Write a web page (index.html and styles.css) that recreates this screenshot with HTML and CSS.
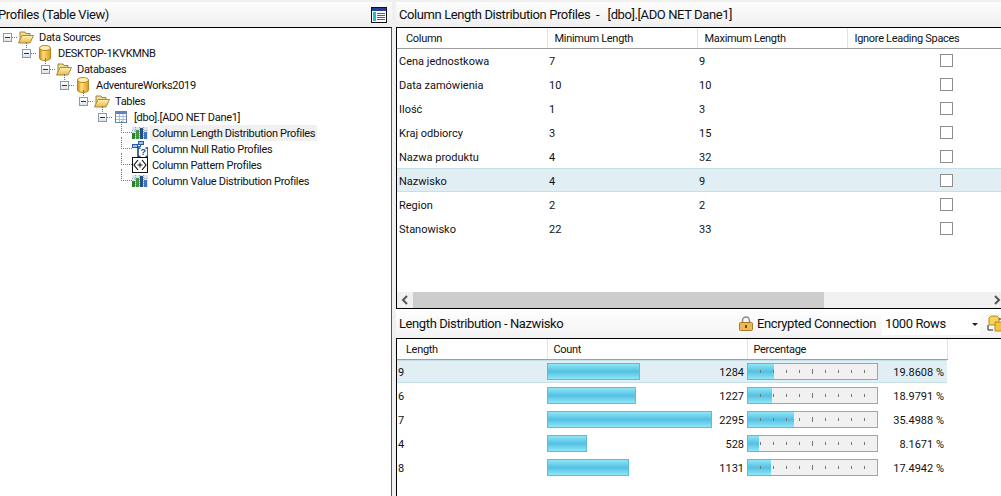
FILE: index.html
```html
<!DOCTYPE html>
<html lang="en">
<head>
<meta charset="UTF-8">
<meta name="viewport" content="width=device-width, initial-scale=1.0">
<title>Data Profile Viewer</title>
<link rel="stylesheet" href="styles.css">
</head>
<body>
<svg class="defs" width="0" height="0">
    <defs>
        <linearGradient id="dbFill" x1="0" x2="1" y1="0" y2="0">
            <stop offset="0" stop-color="#c98a12"/>
            <stop offset="0.35" stop-color="#ffe07a"/>
            <stop offset="1" stop-color="#d99a1e"/>
        </linearGradient>
        <linearGradient id="folderFill" x1="0" x2="0" y1="0" y2="1">
            <stop offset="0" stop-color="#fff3b8"/>
            <stop offset="1" stop-color="#eeb73f"/>
        </linearGradient>
        <symbol id="folder" viewBox="0 0 16 16">
            <path d="M2 13V3h5l1 1.500h4V7" fill="#f5dc8c" stroke="#9a8448"/>
            <path d="M.5 14 4 6.500h11.500L12 14z" fill="url(#folderFill)" stroke="#a58a45"/>
        </symbol>
        <symbol id="db" viewBox="0 0 12 16">
            <path d="M.5 3v10c0 1.500 2.500 2.500 5.500 2.500s5.500-1 5.500-2.500V3z" fill="url(#dbFill)" stroke="#b9862a"/>
            <ellipse cx="6" cy="3" rx="5.500" ry="2.500" fill="#fff2b0" stroke="#b9862a"/>
        </symbol>
        <symbol id="table" viewBox="0 0 12 12">
            <rect x=".5" y=".5" width="11" height="11" fill="#fff" stroke="#6d83a6"/>
            <rect x="1" y="1" width="10" height="2" fill="#5f83c0"/>
            <path d="M1 5.500h10M1 8.500h10M4.500 3v8M8 3v8" stroke="#a9bcd6"/>
        </symbol>
        <symbol id="chart" viewBox="0 0 16 12">
            <rect width="16" height="12" fill="#dfe3ea"/>
            <path d="M3.500 0v12M7.500 0v12M11.500 0v12M0 3.500h16M0 7.500h16" stroke="#9aa3b2" stroke-dasharray="1 1"/>
            <rect x="0" y="6" width="3" height="6" fill="#2f7d2f"/>
            <rect x="4" y="3" width="3" height="9" fill="#3c9a3c"/>
            <rect x="8" y="1" width="3" height="11" fill="#274f8e"/>
            <rect x="12" y="5" width="3" height="7" fill="#3f74c4"/>
        </symbol>
        <symbol id="nullratio" viewBox="0 0 16 16">
            <rect x="6.500" y=".5" width="5" height="3" fill="#9cc0ee" stroke="#2f5c9e"/>
            <rect x=".5" y="3.500" width="5" height="3" fill="#9cc0ee" stroke="#2f5c9e"/>
            <path d="M8.500 3.500v2h-3" fill="none" stroke="#2f5c9e"/>
            <path d="M8.500 7h-2.500v8.500h2.500M13.500 7h2.500v8.500h-2.500" fill="none" stroke="#17458c" stroke-width="1.600"/>
            <text x="11" y="14" text-anchor="middle" class="qmark">?</text>
        </symbol>
        <symbol id="pattern" viewBox="0 0 16 16">
            <rect x=".5" y=".5" width="15" height="15" fill="#fff" stroke="#111"/>
            <path d="M6 3 2 8l4 5M10 3l4 5-4 5" fill="none" stroke="#111" stroke-width="1.200"/>
            <path d="M8 5.500v5M5.500 8h5" stroke="#111"/>
        </symbol>
    </defs>
</svg>

<div class="window">
    <section class="left-pane">
        <header class="titlebar">
            <span class="title clipped">Profiles (Table View)</span>
            <svg class="view-icon" width="16" height="16" viewBox="0 0 16 16">
                <rect x=".5" y=".5" width="15" height="15" fill="#fff" stroke="#111"/>
                <rect x="1" y="1" width="14" height="3" fill="#27409a"/>
                <rect x="2" y="5" width="3" height="9" fill="#2ab4e0"/>
                <path d="M6 6.500h8M6 8.500h8M6 10.500h8M6 12.500h8" stroke="#2f62c8"/>
            </svg>
        </header>
        <ul class="tree">
            <li class="node lvl-0"><i class="expander"></i><svg class="ico-folder"><use href="#folder"/></svg><span>Data Sources</span></li>
            <li class="node lvl-1"><i class="expander"></i><svg class="ico-db"><use href="#db"/></svg><span>DESKTOP-1KVKMNB</span></li>
            <li class="node lvl-2"><i class="expander"></i><svg class="ico-folder"><use href="#folder"/></svg><span>Databases</span></li>
            <li class="node lvl-3"><i class="expander"></i><svg class="ico-db"><use href="#db"/></svg><span>AdventureWorks2019</span></li>
            <li class="node lvl-4"><i class="expander"></i><svg class="ico-folder"><use href="#folder"/></svg><span>Tables</span></li>
            <li class="node lvl-5"><i class="expander"></i><svg class="ico-table"><use href="#table"/></svg><span>[dbo].[ADO NET Dane1]</span></li>
            <li class="node leaf"><i class="branch"></i><svg class="ico-leaf"><use href="#chart"/></svg><span class="current">Column Length Distribution Profiles</span></li>
            <li class="node leaf"><i class="branch"></i><svg class="ico-leaf"><use href="#nullratio"/></svg><span>Column Null Ratio Profiles</span></li>
            <li class="node leaf"><i class="branch"></i><svg class="ico-leaf"><use href="#pattern"/></svg><span>Column Pattern Profiles</span></li>
            <li class="node leaf"><i class="branch"></i><svg class="ico-leaf"><use href="#chart"/></svg><span>Column Value Distribution Profiles</span></li>
        </ul>
    </section>

    <section class="right-pane">
        <header class="titlebar">
            <span class="title">Column Length Distribution Profiles &nbsp;-&nbsp;&nbsp; [dbo].[ADO NET Dane1]</span>
        </header>
        <div class="grid-box upper">
            <table class="grid">
                <thead>
                    <tr><th>Column</th><th>Minimum Length</th><th>Maximum Length</th><th>Ignore Leading Spaces</th></tr>
                </thead>
                <tbody>
                    <tr><td>Cena jednostkowa</td><td>7</td><td>9</td><td class="check"><i></i></td></tr>
                    <tr><td>Data zamówienia</td><td>10</td><td>10</td><td class="check"><i></i></td></tr>
                    <tr><td>Ilość</td><td>1</td><td>3</td><td class="check"><i></i></td></tr>
                    <tr><td>Kraj odbiorcy</td><td>3</td><td>15</td><td class="check"><i></i></td></tr>
                    <tr><td>Nazwa produktu</td><td>4</td><td>32</td><td class="check"><i></i></td></tr>
                    <tr class="selected"><td>Nazwisko</td><td>4</td><td>9</td><td class="check"><i></i></td></tr>
                    <tr><td>Region</td><td>2</td><td>2</td><td class="check"><i></i></td></tr>
                    <tr><td>Stanowisko</td><td>22</td><td>33</td><td class="check"><i></i></td></tr>
                </tbody>
            </table>
            <div class="scrollbar">
                <svg class="arrow" width="16" height="16" viewBox="0 0 16 16"><path d="M10 4 6 8l4 4" fill="none" stroke="#555" stroke-width="2"/></svg>
                <div class="thumb"></div>
                <div class="track"></div>
                <svg class="arrow end" width="16" height="16" viewBox="0 0 16 16"><path d="M6 4l4 4-4 4" fill="none" stroke="#555" stroke-width="2"/></svg>
            </div>
        </div>

        <header class="titlebar sub">
            <span class="title">Length Distribution - Nazwisko</span>
            <div class="tools">
                <svg width="14" height="15" viewBox="0 0 14 15">
                    <path d="M3.500 7V4.500a3.500 3.500 0 0 1 7 0V7" fill="none" stroke="#8a8a80" stroke-width="1.500"/>
                    <rect x=".5" y="6.500" width="13" height="8" rx="1" fill="#e9b95a" stroke="#a77b2a"/>
                    <path d="M7 9v3" stroke="#6d4d12" stroke-width="2"/>
                </svg>
                <span class="encrypted">Encrypted Connection</span>
                <div class="rows-select">1000 Rows<b></b></div>
                <svg class="cubes" width="16" height="17" viewBox="0 0 16 17">
                    <path d="M4 1h6l2 2v7H2V3z" fill="#f7d35c" stroke="#b28a1e"/>
                    <path d="M8 7h8v9H8z" fill="#f2c438" stroke="#b28a1e"/>
                    <path d="M1 10v5h5M12 4h3v2" fill="none" stroke="#222"/>
                </svg>
            </div>
        </header>
        <div class="grid-box lower">
            <table class="grid dist">
                <thead>
                    <tr><th>Length</th><th>Count</th><th>Percentage</th></tr>
                </thead>
                <tbody>
                    <tr class="selected">
                        <td>9</td>
                        <td><div class="count"><div class="bar" style="width:93px"></div><span>1284</span></div></td>
                        <td><div class="pct"><div class="meter"><div class="fill" style="width:19.86%"></div><div class="ticks"><i></i><i></i><i></i><i></i><i class="mid"></i><i></i><i></i><i></i><i></i></div></div><span>19.8608 %</span></div></td>
                    </tr>
                    <tr>
                        <td>6</td>
                        <td><div class="count"><div class="bar" style="width:89px"></div><span>1227</span></div></td>
                        <td><div class="pct"><div class="meter"><div class="fill" style="width:18.98%"></div><div class="ticks"><i></i><i></i><i></i><i></i><i class="mid"></i><i></i><i></i><i></i><i></i></div></div><span>18.9791 %</span></div></td>
                    </tr>
                    <tr>
                        <td>7</td>
                        <td><div class="count"><div class="bar" style="width:165px"></div><span>2295</span></div></td>
                        <td><div class="pct"><div class="meter"><div class="fill" style="width:35.5%"></div><div class="ticks"><i></i><i></i><i></i><i></i><i class="mid"></i><i></i><i></i><i></i><i></i></div></div><span>35.4988 %</span></div></td>
                    </tr>
                    <tr>
                        <td>4</td>
                        <td><div class="count"><div class="bar" style="width:40px"></div><span>528</span></div></td>
                        <td><div class="pct"><div class="meter"><div class="fill" style="width:8.17%"></div><div class="ticks"><i></i><i></i><i></i><i></i><i class="mid"></i><i></i><i></i><i></i><i></i></div></div><span>8.1671 %</span></div></td>
                    </tr>
                    <tr>
                        <td>8</td>
                        <td><div class="count"><div class="bar" style="width:82px"></div><span>1131</span></div></td>
                        <td><div class="pct"><div class="meter"><div class="fill" style="width:17.49%"></div><div class="ticks"><i></i><i></i><i></i><i></i><i class="mid"></i><i></i><i></i><i></i><i></i></div></div><span>17.4942 %</span></div></td>
                    </tr>
                </tbody>
            </table>
        </div>
    </section>
</div>
</body>
</html>
```

FILE: styles.css
```css
html, body {
    margin: 0;
    height: 100%;
    overflow: hidden;
}
body {
    background: #f0f0f0;
    font-family: Roboto, "Noto Sans", sans-serif;
    font-size: 11px;
    letter-spacing: -0.3px;
    color: #111;
}
.defs {
    position: absolute;
}
.qmark {
    font-family: "Liberation Sans", sans-serif;
    font-size: 9px;
    font-weight: bold;
    fill: #17458c;
}
.window {
    display: flex;
    height: 494px;
    padding-top: 2px;
}
.left-pane {
    width: 392px;
    flex: none;
    display: flex;
    flex-direction: column;
}
.right-pane {
    margin-left: 4px;
    flex: 1;
    min-width: 0;
    display: flex;
    flex-direction: column;
}
.titlebar {
    height: 25px;
    flex: none;
    display: flex;
    align-items: center;
    justify-content: space-between;
    background: linear-gradient(#fdfdfd, #efefef);
    font-size: 13px;
    letter-spacing: -0.4px;
    white-space: nowrap;
}
.title {
    padding-left: 3px;
}
.title.clipped {
    padding-left: 0;
    margin-left: -2px;
}
.view-icon {
    margin-right: 5px;
}

/* tree */
.tree {
    flex: 1;
    margin: 0;
    padding: 1px 0 0;
    list-style: none;
    background: #fff;
    border-top: 1px solid #000;
    border-right: 1px solid #555;
}
.node {
    position: relative;
    height: 16px;
    display: flex;
    align-items: center;
    white-space: nowrap;
}
.lvl-0 { padding-left: 3px; }
.lvl-1 { padding-left: 22px; }
.lvl-2 { padding-left: 41px; }
.lvl-3 { padding-left: 60px; }
.lvl-4 { padding-left: 79px; }
.lvl-5 { padding-left: 98px; }
.leaf { padding-left: 132px; }
.expander {
    position: relative;
    flex: none;
    box-sizing: border-box;
    width: 9px;
    height: 9px;
    border: 1px solid #8a9bb0;
    background: linear-gradient(#fff, #dfe3ea);
}
.expander::before {
    content: "";
    position: absolute;
    left: 1px;
    right: 1px;
    top: 3px;
    height: 1px;
    background: #333;
}
.expander::after {
    content: "";
    position: absolute;
    left: 8px;
    top: 3px;
    width: 5px;
    border-top: 1px dotted #777;
}
.node:not(.lvl-0):not(.leaf)::before {
    content: "";
    position: absolute;
    top: -3px;
    height: 6px;
    border-left: 1px dotted #777;
}
.lvl-1::before { left: 26px; }
.lvl-2::before { left: 45px; }
.lvl-3::before { left: 64px; }
.lvl-4::before { left: 83px; }
.lvl-5::before { left: 102px; }
.branch {
    position: absolute;
    left: 121px;
    top: -4px;
    width: 11px;
    height: 12px;
    border-left: 1px dotted #777;
    border-bottom: 1px dotted #777;
    box-sizing: border-box;
}
.ico-folder {
    width: 16px;
    height: 16px;
    margin-left: 6px;
    flex: none;
}
.ico-db {
    width: 12px;
    height: 16px;
    margin-left: 8px;
    flex: none;
}
.ico-table {
    width: 12px;
    height: 12px;
    margin-left: 8px;
    flex: none;
}
.ico-leaf {
    width: 16px;
    height: 16px;
    flex: none;
}
.node span {
    box-sizing: border-box;
    height: 16px;
    padding: 1px 2px 0;
    line-height: 15px;
}
.lvl-0 span, .lvl-2 span, .lvl-4 span {
    margin-left: 3px;
}
.lvl-1 span, .lvl-3 span, .lvl-5 span {
    margin-left: 5px;
}
.leaf span {
    margin-left: 2px;
}
.current {
    background: #f0f0f0;
}

/* grids */
.grid-box {
    background: #fff;
    border-top: 1px solid #000;
    border-left: 1px solid #000;
    box-sizing: border-box;
    overflow: hidden;
}
.upper {
    height: 282px;
    flex: none;
    display: flex;
    flex-direction: column;
    justify-content: space-between;
    border-bottom: 1px solid #000;
}
.lower {
    flex: 1;
}
.grid {
    border-collapse: collapse;
    table-layout: fixed;
    width: 604px;
    white-space: nowrap;
}
.grid th {
    width: 150px;
    box-sizing: border-box;
    height: 20px;
    padding: 2px 0 0 7px;
    text-align: left;
    font-weight: normal;
    background: #fff;
    border-right: 1px solid #e3e3e3;
    border-bottom: 1px solid #a0a0a0;
}
.grid th:first-child {
    padding-left: 9px;
}
.grid th:last-child {
    width: auto;
    border-right: none;
}
.grid td {
    height: 24px;
    padding: 2px 0 0 2px;
    box-sizing: border-box;
    letter-spacing: 0;
}
.grid td.check {
    padding-top: 0;
}
.selected td {
    background: #e1eff5;
    box-shadow: inset 0 1px 0 #c6e0e9, inset 0 -1px 0 #c6e0e9;
}
.check i {
    display: block;
    box-sizing: border-box;
    width: 13px;
    height: 13px;
    margin-left: 91px;
    border: 1px solid #8e8e8e;
    background: #fff;
}

/* scrollbar */
.scrollbar {
    height: 16px;
    flex: none;
    display: flex;
    background: #f0f0f0;
}
.arrow {
    flex: none;
}
.arrow.end {
    margin-right: -4px;
}
.thumb {
    width: 411px;
    flex: none;
    background: #cdcdcd;
}
.track {
    flex: 1;
}

/* lower title */
.sub {
    height: 29px;
    background: linear-gradient(#fff, #f2f2f2);
}
.tools {
    display: flex;
    align-items: center;
}
.encrypted {
    width: 118px;
    margin-left: 4px;
}
.rows-select {
    box-sizing: border-box;
    width: 98px;
    height: 22px;
    line-height: 22px;
    margin-left: 7px;
    padding-left: 3px;
    background: #fff;
    position: relative;
}
.rows-select b {
    position: absolute;
    right: 2px;
    top: 10px;
    border: 3px solid transparent;
    border-top-color: #222;
}
.cubes {
    margin: 0 -2px 0 7px;
    flex: none;
}

/* distribution grid */
.dist {
    width: 550px;
}
.dist th {
    width: 200px;
    padding-left: 6px;
}
.dist th:first-child {
    width: 150px;
}
.dist th:last-child {
    width: 200px;
    border-right: 1px solid #e3e3e3;
}
.dist td {
    padding: 1px 0 0;
}
.dist td:first-child {
    padding: 2px 0 0 1px;
}
.count, .pct {
    display: flex;
    align-items: center;
    justify-content: space-between;
}
.bar, .meter {
    box-sizing: border-box;
    height: 17px;
    border: 1px solid #5fbcd8;
}
.bar, .fill {
    background: linear-gradient(#8fe6f8, #54c0e2 50%, #8fe6f8);
}
.count span, .pct span {
    padding: 1px 3px 0 0;
}
.meter {
    position: relative;
    width: 131px;
    background: #f1f1f1;
}
.fill {
    height: 100%;
}
.ticks {
    position: absolute;
    left: 12px;
    top: 0;
    display: flex;
    gap: 12px;
    align-items: center;
    height: 100%;
}
.ticks i {
    width: 1px;
    height: 3px;
    background: #777;
}
.ticks i.mid {
    height: 5px;
}
```
